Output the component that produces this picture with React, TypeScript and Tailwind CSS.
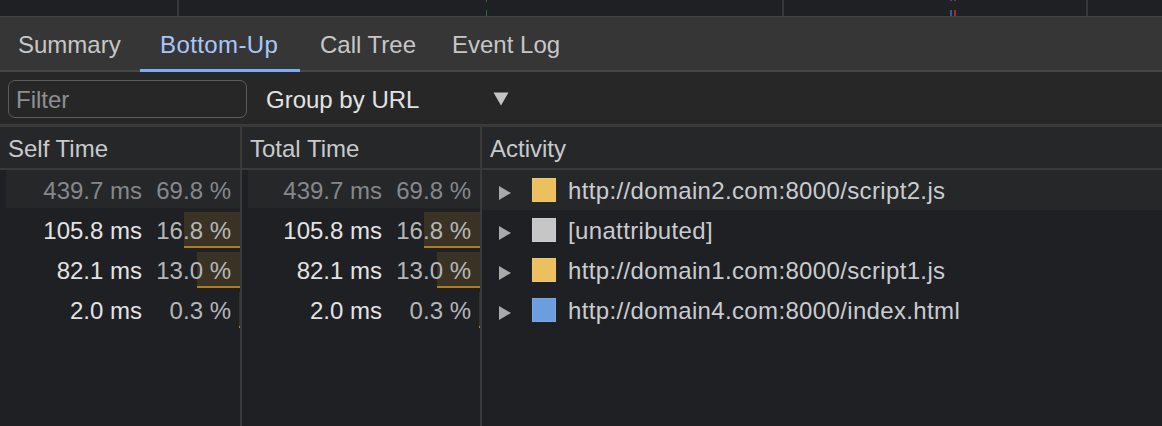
import type { CSSProperties } from "react";

type Row = {
  self: string;
  selfPct: number;
  total: string;
  totalPct: number;
  color: string;
  name: string;
  dim?: boolean;
};

const rows: Row[] = [
  { self: "439.7 ms", selfPct: 69.8, total: "439.7 ms", totalPct: 69.8, color: "#ecc05e", name: "http://domain2.com:8000/script2.js", dim: true },
  { self: "105.8 ms", selfPct: 16.8, total: "105.8 ms", totalPct: 16.8, color: "#c6c6c6", name: "[unattributed]" },
  { self: "82.1 ms", selfPct: 13.0, total: "82.1 ms", totalPct: 13.0, color: "#ecc05e", name: "http://domain1.com:8000/script1.js" },
  { self: "2.0 ms", selfPct: 0.3, total: "2.0 ms", totalPct: 0.3, color: "#6c9ddf", name: "http://domain4.com:8000/index.html" },
];

const MAX = 69.8;

function TimeCell({ ms, pct, dim, width }: { ms: string; pct: number; dim?: boolean; width: number }) {
  const barStyle: CSSProperties = { width: Math.max(1, Math.round((pct / MAX) * width)) };
  return (
    <div className="relative h-[40px] flex items-center justify-end pt-[2px]">
      {dim ? (
        <div className="absolute left-[6px] right-0 top-0 bottom-[2px] bg-[#262729]" />
      ) : (
        <div
          className="absolute right-0 top-[2px] bottom-[2px] bg-[#3a3224] border-b-2 border-[#b07d1e]"
          style={barStyle}
        />
      )}
      <span className={`relative ${dim ? "text-[#85888c]" : "text-[#e3e3e3]"}`}>{ms}</span>
      <span className={`relative w-[98px] pr-[9px] text-right ${dim ? "text-[#85888c]" : "text-[#b4b7ba]"}`}>
        {pct.toFixed(1)} %
      </span>
    </div>
  );
}

function Tab({ label, width, active }: { label: string; width: string; active?: boolean }) {
  return (
    <div
      className={`relative h-full flex items-center pl-[20px] pt-[2px] ${width} ${active ? "text-[#a8c7fa] tracking-[0.4px]" : "text-[#c7c7c7]"}`}
    >
      {label}
      {active ? <div className="absolute left-0 right-0 bottom-[-2px] h-[3px] bg-[#7cacf8]" /> : null}
    </div>
  );
}

export default function App() {
  return (
    <div className="w-[1162px] h-[426px] overflow-hidden bg-[#1f2023] flex flex-col text-[24px] leading-none font-['Liberation_Sans',Arial,sans-serif]">
      {/* timeline overview strip */}
      <div className="relative h-[16px] shrink-0 bg-[#1f2023]">
        <div className="absolute left-[177px] top-0 bottom-0 w-[2px] bg-[#36373a]" />
        <div className="absolute left-[486px] top-0 h-[2px] w-[1px] bg-[#2f6b3a]" />
        <div className="absolute left-[486px] top-[10px] bottom-0 w-[1px] bg-[#2f6b3a]" />
        <div className="absolute left-[782px] top-0 bottom-0 w-[2px] bg-[#36373a]" />
        <div className="absolute left-[950px] top-0 h-[1px] w-[2px] bg-[#2c5aa0]" />
        <div className="absolute left-[954px] top-0 h-[1px] w-[2px] bg-[#a02c2c]" />
        <div className="absolute left-[950px] top-[10px] bottom-0 w-[2px] bg-[#2c5aa0]" />
        <div className="absolute left-[954px] top-[10px] bottom-0 w-[2px] bg-[#a02c2c]" />
        <div className="absolute left-[1086px] top-0 bottom-0 w-[2px] bg-[#36373a]" />
      </div>

      {/* tabs */}
      <div className="h-[56px] shrink-0 bg-[#363636] border-t border-[#444444] border-b-2 border-b-[#464646] flex">
        <div className="flex h-full -ml-[2px]">
          <Tab label="Summary" width="w-[142px]" />
          <Tab label="Bottom-Up" width="w-[160px]" active />
          <Tab label="Call Tree" width="w-[132px]" />
          <Tab label="Event Log" width="w-[130px]" />
        </div>
      </div>

      {/* toolbar */}
      <div className="h-[52px] shrink-0 bg-[#272727] flex items-center pl-[8px] pt-[2px]">
        <div className="w-[239px] h-[38px] rounded-[7px] border-[1.5px] border-[#5c5c5c] flex items-center pl-[7px] pt-[2px] text-[#8d9094]">
          Filter
        </div>
        <div className="ml-[19px] w-[251px] flex items-center justify-between pt-[1px] text-[#e3e3e3]">
          <span>Group by URL</span>
          <svg width="16" height="14" viewBox="0 0 16 14" className="mr-[8px] -mt-[2px]">
            <polygon points="0.5,0.5 15.5,0.5 8,13.5" fill="#c4c4c4" />
          </svg>
        </div>
      </div>
      <div className="h-[3px] shrink-0 bg-[#3a3a3a]" />

      {/* table */}
      <div className="flex-1 flex min-h-0">
        <div className="w-[242px] shrink-0 border-r-2 border-[#3a3a3a]">
          <div className="h-[43px] bg-[#262728] border-b-2 border-[#3a3a3a] flex items-center pl-[8px] pt-[3px] text-[#c8cacd]">
            Self Time
          </div>
          {rows.map((r) => (
            <TimeCell key={r.name} ms={r.self} pct={r.selfPct} dim={r.dim} width={232} />
          ))}
        </div>
        <div className="w-[240px] shrink-0 border-r-2 border-[#3a3a3a]">
          <div className="h-[43px] bg-[#262728] border-b-2 border-[#3a3a3a] flex items-center pl-[8px] pt-[3px] text-[#c8cacd]">
            Total Time
          </div>
          {rows.map((r) => (
            <TimeCell key={r.name} ms={r.total} pct={r.totalPct} dim={r.dim} width={232} />
          ))}
        </div>
        <div className="flex-1">
          <div className="h-[43px] bg-[#262728] border-b-2 border-[#3a3a3a] flex items-center pl-[8px] pt-[3px] text-[#c8cacd]">
            Activity
          </div>
          {rows.map((r) => (
            <div
              key={r.name}
              className={`h-[40px] flex items-center pl-[17px] ${r.dim ? "bg-[#262729]" : ""}`}
            >
              <svg width="12" height="14" viewBox="0 0 12 14" className="mt-[6px] shrink-0">
                <polygon points="0,0 12,7 0,14" fill="#a9a9a9" />
              </svg>
              <div
                className="ml-[21px] w-[24px] h-[24px] shrink-0 border border-white/10"
                style={{ backgroundColor: r.color }}
              />
              <span className="ml-[12px] pt-[2px] tracking-[0.35px] text-[#c9ccd0]">{r.name}</span>
            </div>
          ))}
        </div>
      </div>
    </div>
  );
}
